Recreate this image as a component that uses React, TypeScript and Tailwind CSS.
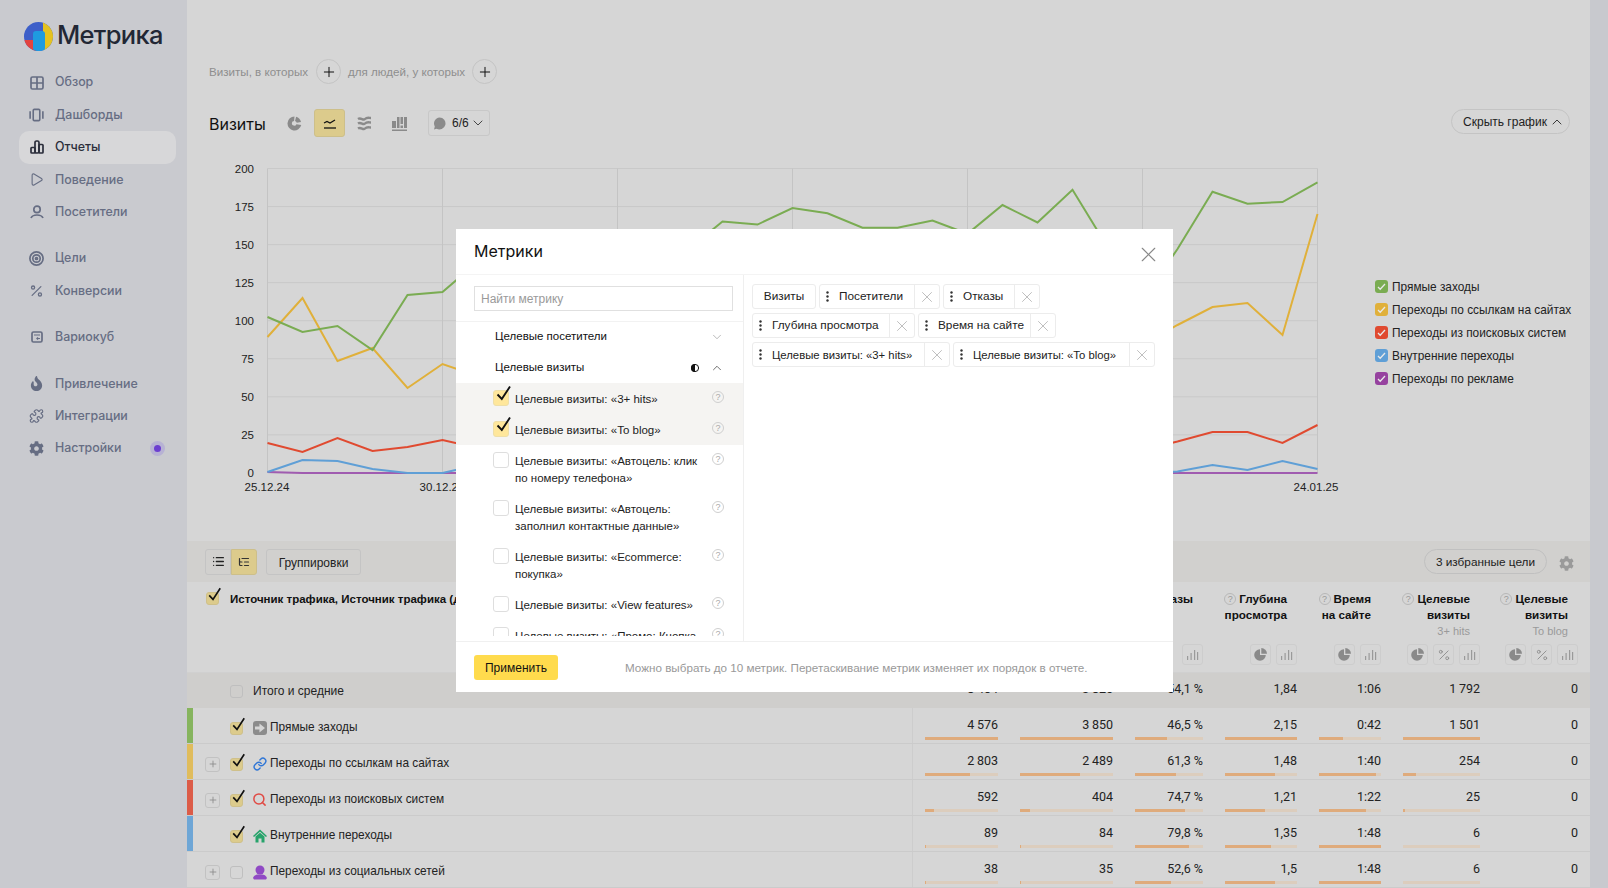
import React from 'react';
import { Play, Percent, Puzzle, ChevronDown, ChevronUp, Plus, X, Link as LinkIcon, Search, List, ListTree } from 'lucide-react';
import { FaCog, FaFire } from 'react-icons/fa';

const F = '[font-family:"Liberation_Sans",Arial,sans-serif]';

const Check = ({ c = 'left-[1px] -top-[6px]', s = 17 }: { c?: string; s?: number }) => (
  <svg className={`absolute ${c}`} width={s} height={s} viewBox="0 0 17 17" fill="none">
    <path d="M2.5 9.5 L6.8 14 L15 1.5" stroke="#111" strokeWidth="1.9" />
  </svg>
);

const Box = ({ on, sm }: { on?: boolean; sm?: boolean }) => (
  <span className={`relative block shrink-0 rounded-[3px] border ${sm ? 'w-[13px] h-[13px]' : 'w-[16px] h-[16px]'} ${on ? (sm ? 'bg-[#dccb8c] border-[#cfc08a]' : 'bg-[#ffe79b] border-[#eedfa8]') : (sm ? 'border-[#bfbfbf]' : 'border-[#dedede] bg-white')}`}>
    {on && (sm ? <Check c="left-[0px] -top-[6px]" s={15} /> : <Check />)}
  </span>
);

const Help = ({ c = '', dark }: { c?: string; dark?: boolean }) => (
  <span className={`flex items-center justify-center rounded-full border w-[12px] h-[12px] text-[9px] leading-none shrink-0 ${dark ? 'border-[#b8b8b8] text-[#999]' : 'border-[#cfcfcf] text-[#aaa]'} ${F} ${c}`}>?</span>
);

const stroke = { fill: 'none', stroke: 'currentColor', strokeWidth: 1.7 };
const navIcons: Record<string, React.ReactNode> = {
  grid: <svg width="14" height="14" viewBox="0 0 14 14" {...stroke}><rect x="1" y="1" width="12" height="12" rx="1.5" /><path d="M7 1v12M1 7h12" /></svg>,
  dash: <svg width="16" height="14" viewBox="0 0 16 14" {...stroke}><rect x="4.5" y="1" width="7" height="12" rx="1.2" /><path d="M1.2 3v8M14.8 3v8" /></svg>,
  bars: <svg width="14" height="14" viewBox="0 0 14 14" {...stroke}><rect x="1" y="7.5" width="4" height="5.5" rx=".8" /><rect x="5" y="1" width="4" height="12" rx="1.6" /><rect x="9" y="4.5" width="4" height="8.5" rx=".8" /></svg>,
  play: <Play size={17} strokeWidth={1.8} />,
  user: <svg width="14" height="14" viewBox="0 0 14 14" {...stroke}><circle cx="7" cy="4.4" r="3.2" /><path d="M1 13c1-2.4 3-3 6-3s5 .6 6 3" /></svg>,
  target: <svg width="15" height="15" viewBox="0 0 15 15" {...stroke}><circle cx="7.5" cy="7.5" r="6.6" /><circle cx="7.5" cy="7.5" r="3.7" /><circle cx="7.5" cy="7.5" r="1" /></svg>,
  pct: <Percent size={16} strokeWidth={2.1} />,
  cube: <svg width="12" height="12" viewBox="0 0 12 12" {...stroke}><rect x="1" y="1" width="10" height="10" rx="1.5" /><path d="M3 4h6M9 7.5H6M7 6.3 5.8 7.5 7 8.7" strokeWidth="1.1" /></svg>,
  flame: <FaFire size={15} />,
  puzzle: <Puzzle size={16} strokeWidth={1.9} />,
  gear: <FaCog size={15} />,
};

const NavItem = ({ icon, label, active, dot }: { icon: string; label: string; active?: boolean; dot?: boolean }) => (
  <div className={`flex items-center h-[32.4px] pl-[10px] mx-[19px] rounded-[10px] w-[157px] ${active ? 'bg-[#d7d7d9] text-[#2b2e3b]' : 'text-[#666d83]'}`}>
    <span className="w-[15px] flex justify-center shrink-0">{navIcons[icon]}</span>
    <span className="ml-[11px] text-[12.4px] font-medium flex-1">{label}</span>
    {dot && (
      <span className="flex items-center justify-center w-[15px] h-[15px] rounded-full bg-[#b7b2d4] mr-[11px]">
        <span className="w-[7px] h-[7px] rounded-full bg-[#6c3fd0]" />
      </span>
    )}
  </div>
);

const Sidebar = () => (
  <aside className="w-[187px] shrink-0 bg-[#c9cacf] [font-family:Inter,sans-serif]">
    <div className="flex items-center pt-[6px] pl-[24px] h-[66px]">
      <svg width="29" height="29" viewBox="0 0 29 29" className="shrink-0">
        <defs><clipPath id="lg"><circle cx="14.5" cy="14.5" r="14.5" /></clipPath></defs>
        <g clipPath="url(#lg)">
          <rect width="29" height="29" fill="#3d5fc9" />
          <rect x="0" y="18" width="12" height="11" fill="#e2433f" />
          <rect x="19" y="0" width="10" height="29" fill="#e5c21f" />
          <rect x="9" y="9" width="12" height="20" rx="3" fill="#1e9be0" />
        </g>
      </svg>
      <span className="ml-[4px] -mt-[3px] text-[25.5px] font-medium tracking-[-0.7px] text-[#222735] leading-none">Метрика</span>
    </div>
    <div className="mt-[0.5px]">
      <NavItem icon="grid" label="Обзор" />
      <NavItem icon="dash" label="Дашборды" />
      <NavItem icon="bars" label="Отчеты" active />
      <NavItem icon="play" label="Поведение" />
      <NavItem icon="user" label="Посетители" />
    </div>
    <div className="mt-[14px]">
      <NavItem icon="target" label="Цели" />
      <NavItem icon="pct" label="Конверсии" />
    </div>
    <div className="mt-[14px]"><NavItem icon="cube" label="Вариокуб" /></div>
    <div className="mt-[14px]">
      <NavItem icon="flame" label="Привлечение" />
      <NavItem icon="puzzle" label="Интеграции" />
      <NavItem icon="gear" label="Настройки" dot />
    </div>
  </aside>
);

const xs = (i: number) => 267.5 + 35 * i;
const series: [string, number[]][] = [
  ['#a05cb0', [472, 473, 473, 473, 473, 473, 473, 473, 473, 473, 473, 473, 473, 473, 473, 473, 473, 473, 473, 473, 473, 473, 473, 473, 473, 473, 473, 473, 473, 473, 473]],
  ['#5f9fd6', [472, 460, 461, 469, 473, 473, 465, 470, 470, 470, 470, 470, 470, 470, 470, 470, 470, 470, 470, 470, 470, 470, 470, 470, 470, 473, 471.5, 465, 470, 461, 469]],
  ['#e04a30', [443, 452, 438, 451, 447, 440, 448, 445, 445, 445, 445, 445, 445, 445, 445, 445, 445, 445, 445, 445, 445, 445, 445, 445, 445, 450, 441.5, 432, 432, 443, 425]],
  ['#e0b03a', [337, 298, 361, 348, 388, 364, 376, 370, 370, 370, 370, 370, 370, 370, 370, 370, 370, 370, 370, 370, 370, 370, 370, 370, 370, 345, 325, 307, 303, 335, 214]],
  ['#7aac52', [317, 332, 326, 350, 295, 292, 262, 260, 260, 260, 260, 260, 250, 221.5, 224.6, 208, 213.3, 227.7, 227.7, 220.5, 233.8, 205, 222.5, 189.7, 247, 300, 249, 191.7, 203.7, 202, 182.3]],
];
const yLabels = [200, 175, 150, 125, 100, 75, 50, 25, 0];
const yPos = (k: number) => 168.5 + 38.05 * k;

const Chart = () => (
  <svg width="1130" height="350" viewBox="220 150 1130 350" className="block shrink-0">
    {yLabels.map((l, k) => (
      <g key={l}>
        <line x1="267.5" x2="1317.5" y1={yPos(k)} y2={yPos(k)} stroke="#c9c9c9" strokeWidth="1" />
        <text x="254" y={yPos(k) + 4} textAnchor="end" fontSize="11.5" fontFamily="Liberation Sans" fill="#222">{l}</text>
      </g>
    ))}
    {[0, 5, 10, 15, 20, 25, 30].map(i => <line key={i} x1={xs(i)} x2={xs(i)} y1="168.5" y2="473" stroke="#c4c4c4" strokeWidth="1" />)}
    {series.map(([c, d]) => (
      <polyline key={c} fill="none" stroke={c} strokeWidth="2" points={d.map((y, i) => `${xs(i)},${y}`).join(' ')} />
    ))}
    <text x="267" y="491" textAnchor="middle" fontSize="11.5" fontFamily="Liberation Sans" fill="#222">25.12.24</text>
    <text x="442" y="491" textAnchor="middle" fontSize="11.5" fontFamily="Liberation Sans" fill="#222">30.12.24</text>
    <text x="1316" y="491" textAnchor="middle" fontSize="11.5" fontFamily="Liberation Sans" fill="#222">24.01.25</text>
  </svg>
);

const legend: [string, string][] = [
  ['bg-[#7aac52]', 'Прямые заходы'],
  ['bg-[#e0b03a]', 'Переходы по ссылкам на сайтах'],
  ['bg-[#e04a30]', 'Переходы из поисковых систем'],
  ['bg-[#5f9fd6]', 'Внутренние переходы'],
  ['bg-[#96429f]', 'Переходы по рекламе'],
];

const Legend = () => (
  <div className="ml-[25px] mt-[130px] flex flex-col gap-[10px] whitespace-nowrap">
    {legend.map(([c, t]) => (
      <div key={t} className={`flex items-center h-[13px] text-[11.85px] text-[#222] ${F}`}>
        <span className={`flex items-center justify-center w-[13px] h-[13px] rounded-[3px] ${c}`}>
          <svg width="9" height="9" viewBox="0 0 9 9" fill="none"><path d="M1 5l2.2 2.2L8 2" stroke="#e8e8e8" strokeWidth="1.3" /></svg>
        </span>
        <span className="ml-[4px] pt-[3px]">{t}</span>
      </div>
    ))}
  </div>
);

const CircleBtn = () => (
  <span className="flex items-center justify-center w-[25px] h-[25px] rounded-full border border-[#c4c4c4] text-[#111]"><Plus size={16} strokeWidth={1.5} /></span>
);

const Top = () => (
  <div className={F}>
    <div className="flex items-center h-[25px] mt-[59px] ml-[22px] text-[11.6px] text-[#8e8e8e]">
      <span>Визиты, в которых</span>
      <span className="ml-[8px]"><CircleBtn /></span>
      <span className="ml-[7px]">для людей, у которых</span>
      <span className="ml-[7px]"><CircleBtn /></span>
    </div>
    <div className="flex items-center h-[28px] mt-[25px] ml-[22px] mr-[20px]">
      <span className="text-[16px] text-[#111] w-[78px] pt-[1px] [font-family:Inter,sans-serif]">Визиты</span>
      <svg width="15" height="15" viewBox="0 0 14 14" className="text-[#8a8a8a] shrink-0"><path d="M7 .5a6.500 6.500 0 1 0 6.300 8L8.800 7.600A2.200 2.200 0 1 1 6.600 4.600Z M8.500.8l-1 3.800a2.200 2.200 0 0 1 1.600 1.700l4-.6A6.500 6.500 0 0 0 8.500.8Z" fill="currentColor" /></svg>
      <span className="ml-[12px] flex items-center justify-center w-[31px] h-[28px] rounded-[3px] bg-[#dccb8c] border border-[#cdbf8a]">
        <svg width="14" height="12" viewBox="0 0 14 12" fill="none" stroke="#111" strokeWidth="1.3"><path d="M1 11h12" /><path d="M1 6l3-1.500 3 1.500 5-3" /></svg>
      </span>
      <svg width="15" height="15" viewBox="0 0 15 15" fill="none" stroke="#8a8a8a" strokeWidth="2.400" className="ml-[12px] shrink-0"><path d="M1 3c3-2 5 2 7 0s4-1 6-1M1 7.500c3-2 5 2 7 0s4-1 6-1M1 12.500c3-2 5 2 7 0s4-1 6-1" /></svg>
      <svg width="15" height="15" viewBox="0 0 15 15" fill="#8a8a8a" className="ml-[20px] shrink-0"><rect x="0" y="5" width="4" height="7" /><rect x="5" y="1" width="2.500" height="11" /><rect x="8.500" y="1" width="2.500" height="7" /><rect x="8.500" y="9.500" width="2.500" height="2.500" /><rect x="12" y="1" width="3" height="11" /><rect x="0" y="13.500" width="15" height="1.500" /></svg>
      <span className="ml-[21px] flex items-center h-[26px] w-[62px] rounded-[3px] border border-[#c8c8c8] pl-[4px] text-[12px] text-[#222]">
        <svg width="13" height="13" viewBox="0 0 13 13" fill="#8a8a8a" className="shrink-0"><path d="M6.500 .5a6 6 0 1 1-3 11.200L1 12.500l.8-3A6 6 0 0 1 6.500.5Z" /></svg>
        <span className="ml-[6px]">6/6</span>
        <ChevronDown size={16} strokeWidth={1.2} className="ml-[1px]" />
      </span>
      <span className="ml-auto flex items-center justify-center h-[25px] w-[119px] pl-[7px] rounded-full border border-[#c4c4c4] text-[12px] text-[#222] gap-[2px] -mt-[3px]">
        Скрыть график <ChevronUp size={16} strokeWidth={1.3} />
      </span>
    </div>
    <div className="flex items-start h-[391px] mt-[13px] ml-[33px]">
      <Chart />
      <Legend />
    </div>
  </div>
);

const Pie = () => <svg width="13" height="13" viewBox="0 0 13 13" fill="#8a8a8a"><path d="M6 1.200A5.800 5.800 0 1 0 11.800 7H6Z" /><path d="M7.300 0v5.700H13A5.800 5.800 0 0 0 7.300 0Z" /></svg>;
const Hist = () => <svg width="12" height="11" viewBox="0 0 12 11" fill="#9a9a9a"><rect x="0" y="7" width="1.200" height="4" /><rect x="3.500" y="4" width="1.200" height="7" /><rect x="7" y="1" width="1.200" height="10" /><rect x="10" y="3" width="1.200" height="8" /></svg>;
const Pc = () => <Percent size={14} strokeWidth={1.500} className="text-[#8a8a8a]" />;

const MiniBtn = ({ children }: { children: React.ReactNode }) => (
  <span className="flex items-center justify-center w-[21px] h-[21px] rounded-[3px] border border-[#cdcdcd]">{children}</span>
);

const colTemplate = 'grid grid-cols-[716px_73px_93px_68px_72px_62px_77px_76px] gap-x-[22px]';

const heads: { t: string[]; sub?: string; btn: ('p' | 'c' | 'h')[] }[] = [
  { t: ['Визиты'], btn: ['p', 'h'] },
  { t: ['Посетители'], btn: ['p', 'h'] },
  { t: ['Отказы'], btn: ['h'] },
  { t: ['Глубина', 'просмотра'], btn: ['p', 'h'] },
  { t: ['Время', 'на сайте'], btn: ['p', 'h'] },
  { t: ['Целевые', 'визиты'], sub: '3+ hits', btn: ['p', 'c', 'h'] },
  { t: ['Целевые', 'визиты'], sub: 'To blog', btn: ['p', 'c', 'h'] },
];

const rows: { c: string; icon: React.ReactNode; t: string; on: boolean; plus: boolean; v: string[]; b: number[] }[] = [
  {
    c: 'bg-[#86b45e]', t: 'Прямые заходы', on: true, plus: false,
    icon: <span className="flex items-center justify-center w-[14px] h-[14px] rounded-[3px] bg-[#8c8c8c] text-[#d6d6d6]"><svg width="10" height="10" viewBox="0 0 9 9" fill="currentColor"><path d="M0 3.200h4V.5L9 4.500 4 8.500V5.800H0Z" /></svg></span>,
    v: ['4\u2009576', '3\u2009850', '46,5 %', '2,15', '0:42', '1\u2009501', '0'], b: [100, 100, 47, 100, 39, 100],
  },
  {
    c: 'bg-[#e0bc5c]', t: 'Переходы по ссылкам на сайтах', on: true, plus: true,
    icon: <LinkIcon size={14} strokeWidth={2.400} className="text-[#2f76d6]" />,
    v: ['2\u2009803', '2\u2009489', '61,3 %', '1,48', '1:40', '254', '0'], b: [61, 65, 61, 70, 92, 17],
  },
  {
    c: 'bg-[#dc5c48]', t: 'Переходы из поисковых систем', on: true, plus: true,
    icon: <Search size={15} strokeWidth={2.400} className="text-[#e04a44] -mt-[2px]" />,
    v: ['592', '404', '74,7 %', '1,21', '1:22', '25', '0'], b: [13, 10.500, 74, 56, 75, 2],
  },
  {
    c: 'bg-[#6ea6d6]', t: 'Внутренние переходы', on: true, plus: false,
    icon: <svg width="14" height="14" viewBox="0 0 14 14" fill="#27a36b"><path d="M7 .5 14 7l-1 1L7 2.800 1 8 0 7Z" /><path d="M2.500 7.500 7 3.800l4.500 3.700V13.500H8.500V9.500h-3V13.500h-3Z" /></svg>,
    v: ['89', '84', '79,8 %', '1,35', '1:48', '6', '0'], b: [2, 1.500, 79, 64, 100, 0],
  },
  {
    c: '', t: 'Переходы из социальных сетей', on: false, plus: true,
    icon: <svg width="14" height="15" viewBox="0 0 14 15" fill="#8f49c4"><circle cx="7" cy="5" r="4.500" /><path d="M0 13c1-2.500 3-3.500 5-3.500h4c2 0 4 1 5 3.500l-1 1.500H1Z" /></svg>,
    v: ['38', '35', '52,6 %', '1,5', '1:48', '6', '0'], b: [1, 1, 53, 70, 100, 0],
  },
];

const PlusBox = () => (
  <span className="flex items-center justify-center w-[15px] h-[15px] rounded-[3px] border border-[#c2c2c2] text-[#8a8a8a]"><Plus size={10} strokeWidth={2} /></span>
);

const Table = () => (
  <div className={F}>
    <div className="flex items-center h-[41px] bg-[#d1d0ce] pl-[18px] pr-[16px] text-[12px] text-[#222]">
      <span className="flex items-center justify-center w-[26px] h-[26px] rounded-l-[3px] border border-[#c4c4c4] text-[#222]"><List size={13} strokeWidth={2.400} /></span>
      <span className="flex items-center justify-center w-[26px] h-[26px] rounded-r-[3px] bg-[#dccb8c] border border-[#cdbf8a] text-[#333]"><ListTree size={12} strokeWidth={2.400} /></span>
      <span className="ml-[9px] flex items-center justify-center w-[95px] h-[26px] pt-[2px] rounded-[3px] border border-[#c4c4c4]">Группировки</span>
      <span className="ml-auto flex items-center justify-center w-[123px] h-[25px] pt-[2px] rounded-full border border-[#c0c0c0] text-[11.8px]">3 избранные цели</span>
      <FaCog size={15} className="ml-[12px] mt-[3px] text-[#9a9a9a]" />
    </div>
    <div className={`${colTemplate} h-[91px] bg-[#d6d6d6] border-b border-[#d0d0d0]`}>
      <div className="flex items-start pt-[9px] pl-[19px] text-[11.5px] font-bold text-[#111] leading-[16px]">
        <span className="mt-[1px]"><Box on sm /></span>
        <span className="ml-[11px]">Источник трафика, Источник трафика (детально)</span>
      </div>
      {heads.map((h, i) => (
        <div key={i} className="flex flex-col items-end pt-[9px]">
          <div className="h-[53px] pr-[10px] w-[110px] -ml-[37px] self-end text-right text-[11.7px] font-bold leading-[16px] text-[#111]">
            {h.t.map((l, k) => (
              <div key={k} className="flex justify-end items-center">
                {k === 0 && <Help dark c="mr-[3px] font-normal" />}{l}
              </div>
            ))}
            {h.sub && <div className="font-normal text-[11px] text-[#9a9a9a]">{h.sub}</div>}
          </div>
          <div className="flex gap-[5px] -ml-[37px]">
            {h.btn.map((b, k) => <MiniBtn key={k}>{b === 'p' ? <Pie /> : b === 'c' ? <Pc /> : <Hist />}</MiniBtn>)}
          </div>
        </div>
      ))}
    </div>
    <div className={`${colTemplate} h-[35px] bg-[#cfcecc] items-center text-[12px] text-[#222]`}>
      <div className="flex items-center pl-[43px] -mr-[10px] pt-[1px]">
        <Box sm />
        <span className="ml-[10px]">Итого и средние</span>
      </div>
      {['8\u2009404', '3\u2009826', '54,1 %', '1,84', '1:06', '1\u2009792', '0'].map((v, i) => (
        <div key={i} className="text-right text-[12.5px] [font-family:Roboto,sans-serif] -mt-[2px]">{v}</div>
      ))}
    </div>
    {rows.map((r, ri) => (
      <div key={ri} className={`${colTemplate} h-[36px] border-b border-[#cbcbcb] text-[11.85px] text-[#222]`}>
        <div className="relative flex items-center pl-[18px] pt-[5px] -mr-[10px] border-r border-[#cdcdcd]">
          <span className={`absolute left-0 top-0 bottom-0 w-[6px] ${r.c}`} />
          <span className="w-[15px] shrink-0">{r.plus && <PlusBox />}</span>
          <span className="ml-[10px]"><Box on={r.on} sm /></span>
          <span className="ml-[9px] w-[15px] flex justify-center shrink-0">{r.icon}</span>
          <span className="ml-[3px]">{r.t}</span>
        </div>
        {r.v.map((v, i) => (
          <div key={i} className="pt-[9px]">
            <div className="text-right text-[12.5px] leading-[16px] [font-family:Roboto,sans-serif]">{v}</div>
            {i < 6 && (
              <div className="mt-[4px] h-[3px] bg-[#dccdbd]">
                <div className="h-full bg-[#dfab7c]" style={{ width: `${r.b[i]}%` }} />
              </div>
            )}
          </div>
        ))}
      </div>
    ))}
  </div>
);

const list: { l: string[]; on?: boolean }[] = [
  { l: ['Целевые визиты: «3+ hits»'], on: true },
  { l: ['Целевые визиты: «To blog»'], on: true },
  { l: ['Целевые визиты: «Автоцель: клик', 'по номеру телефона»'] },
  { l: ['Целевые визиты: «Автоцель:', 'заполнил контактные данные»'] },
  { l: ['Целевые визиты: «Ecommerce:', 'покупка»'] },
  { l: ['Целевые визиты: «View features»'] },
  { l: ['Целевые визиты: «Промо: Кнопка'] },
];

const Dots = () => (
  <svg width="3" height="11" viewBox="0 0 3 11" fill="#333" className="shrink-0"><circle cx="1.500" cy="1.500" r="1.200" /><circle cx="1.500" cy="5.500" r="1.200" /><circle cx="1.500" cy="9.500" r="1.200" /></svg>
);

const Chip = ({ t, w, fixed, small }: { t: string; w: string; fixed?: boolean; small?: boolean }) => (
  <span className={`flex items-center h-[25px] rounded-[3px] border border-[#ececec] ${small ? 'text-[11.3px]' : 'text-[11.8px]'} text-[#222] ${w}`}>
    {fixed ? (
      <span className="flex-1 text-center pt-[1px]">{t}</span>
    ) : (
      <>
        <span className="ml-[6px]"><Dots /></span>
        <span className="ml-[10px] flex-1 whitespace-nowrap pt-[1px]">{t}</span>
        <span className="flex items-center justify-center w-[25px] h-full border-l border-[#ececec] text-[#aaa]"><X size={18} strokeWidth={1} /></span>
      </>
    )}
  </span>
);

const Modal = () => (
  <div className={`absolute left-[456px] top-[229px] w-[717px] h-[463px] bg-white flex flex-col ${F}`}>
    <div className="flex items-center justify-between h-[46px] border-b border-[#f4f4f4] pl-[18px] pr-[12px] shrink-0">
      <span className="text-[16px] text-[#111] -mt-[1px] [font-family:Inter,sans-serif]">Метрики</span>
      <X size={25} strokeWidth={1.1} className="text-[#888] mt-[6px]" />
    </div>
    <div className="flex h-[366px] shrink-0">
      <div className="w-[288px] shrink-0 border-r border-[#efefef] flex flex-col">
        <div className="h-[47px] border-b border-[#f2f2f2] px-[18px] pt-[11px] shrink-0">
          <div className="flex items-center h-[25px] w-[259px] border border-[#e0e0e0] pl-[6px] pt-[1px] text-[12px] text-[#9a9a9a]">Найти метрику</div>
        </div>
        <div className="flex items-center h-[30px] pl-[39px] pr-[19px] text-[11.5px] text-[#111] shrink-0">
          <span className="flex-1">Целевые посетители</span>
          <ChevronDown size={14} strokeWidth={1} className="text-[#888]" />
        </div>
        <div className="flex items-center h-[31px] pl-[39px] pr-[19px] text-[11.5px] text-[#111] shrink-0">
          <span className="flex-1">Целевые визиты</span>
          <svg width="8" height="8" viewBox="0 0 8 8" className="mr-[11px]"><circle cx="4" cy="4" r="3.600" fill="none" stroke="#111" /><path d="M4 0a4 4 0 0 0 0 8Z" fill="#111" /></svg>
          <ChevronUp size={14} strokeWidth={1.200} className="text-[#333]" />
        </div>
        <div className="h-[253px] overflow-hidden">
          {list.map((it, i) => (
            <div key={i} className={`flex items-start pl-[37px] pr-[19px] pt-[7px] ${it.on ? 'bg-[#f5f4f2] h-[31px]' : 'pb-[6px]'}`}>
              <Box on={it.on} />
              <div className="ml-[6px] flex-1 text-[11.5px] leading-[17px] text-[#222] mt-[1px]">
                {it.l.map(x => <div key={x} className="whitespace-nowrap">{x}</div>)}
              </div>
              <Help c="mt-[1px]" />
            </div>
          ))}
        </div>
      </div>
      <div className="flex-1 pt-[9px] pl-[8px] flex flex-col gap-[4px]">
        <div className="flex gap-[3px]">
          <Chip t="Визиты" w="w-[64px]" fixed />
          <Chip t="Посетители" w="w-[121px]" />
          <Chip t="Отказы" w="w-[97px]" />
        </div>
        <div className="flex gap-[3px]">
          <Chip t="Глубина просмотра" w="w-[163px]" />
          <Chip t="Время на сайте" w="w-[138px]" />
        </div>
        <div className="flex gap-[3px]">
          <Chip t="Целевые визиты: «3+ hits»" w="w-[198px]" small />
          <Chip t="Целевые визиты: «To blog»" w="w-[202px]" small />
        </div>
      </div>
    </div>
    <div className="flex items-center h-[51px] border-t border-[#f0f0f0] pl-[18px] pt-[1px]">
      <span className="flex items-center justify-center w-[84px] h-[25px] rounded-[3px] bg-[#ffdb4d] text-[12px] text-[#111]">Применить</span>
      <span className="ml-[67px] text-[11.66px] text-[#999]">Можно выбрать до 10 метрик. Перетаскивание метрик изменяет их порядок в отчете.</span>
    </div>
  </div>
);

export default function App() {
  return (
    <div className="relative flex w-[1608px] h-[888px] overflow-hidden bg-[#d6d6d6]">
      <Sidebar />
      <main className="w-[1403px] shrink-0 flex flex-col">
        <Top />
        <Table />
      </main>
      <div className="flex-1 bg-[#c8c9ce]" />
      <Modal />
    </div>
  );
}
